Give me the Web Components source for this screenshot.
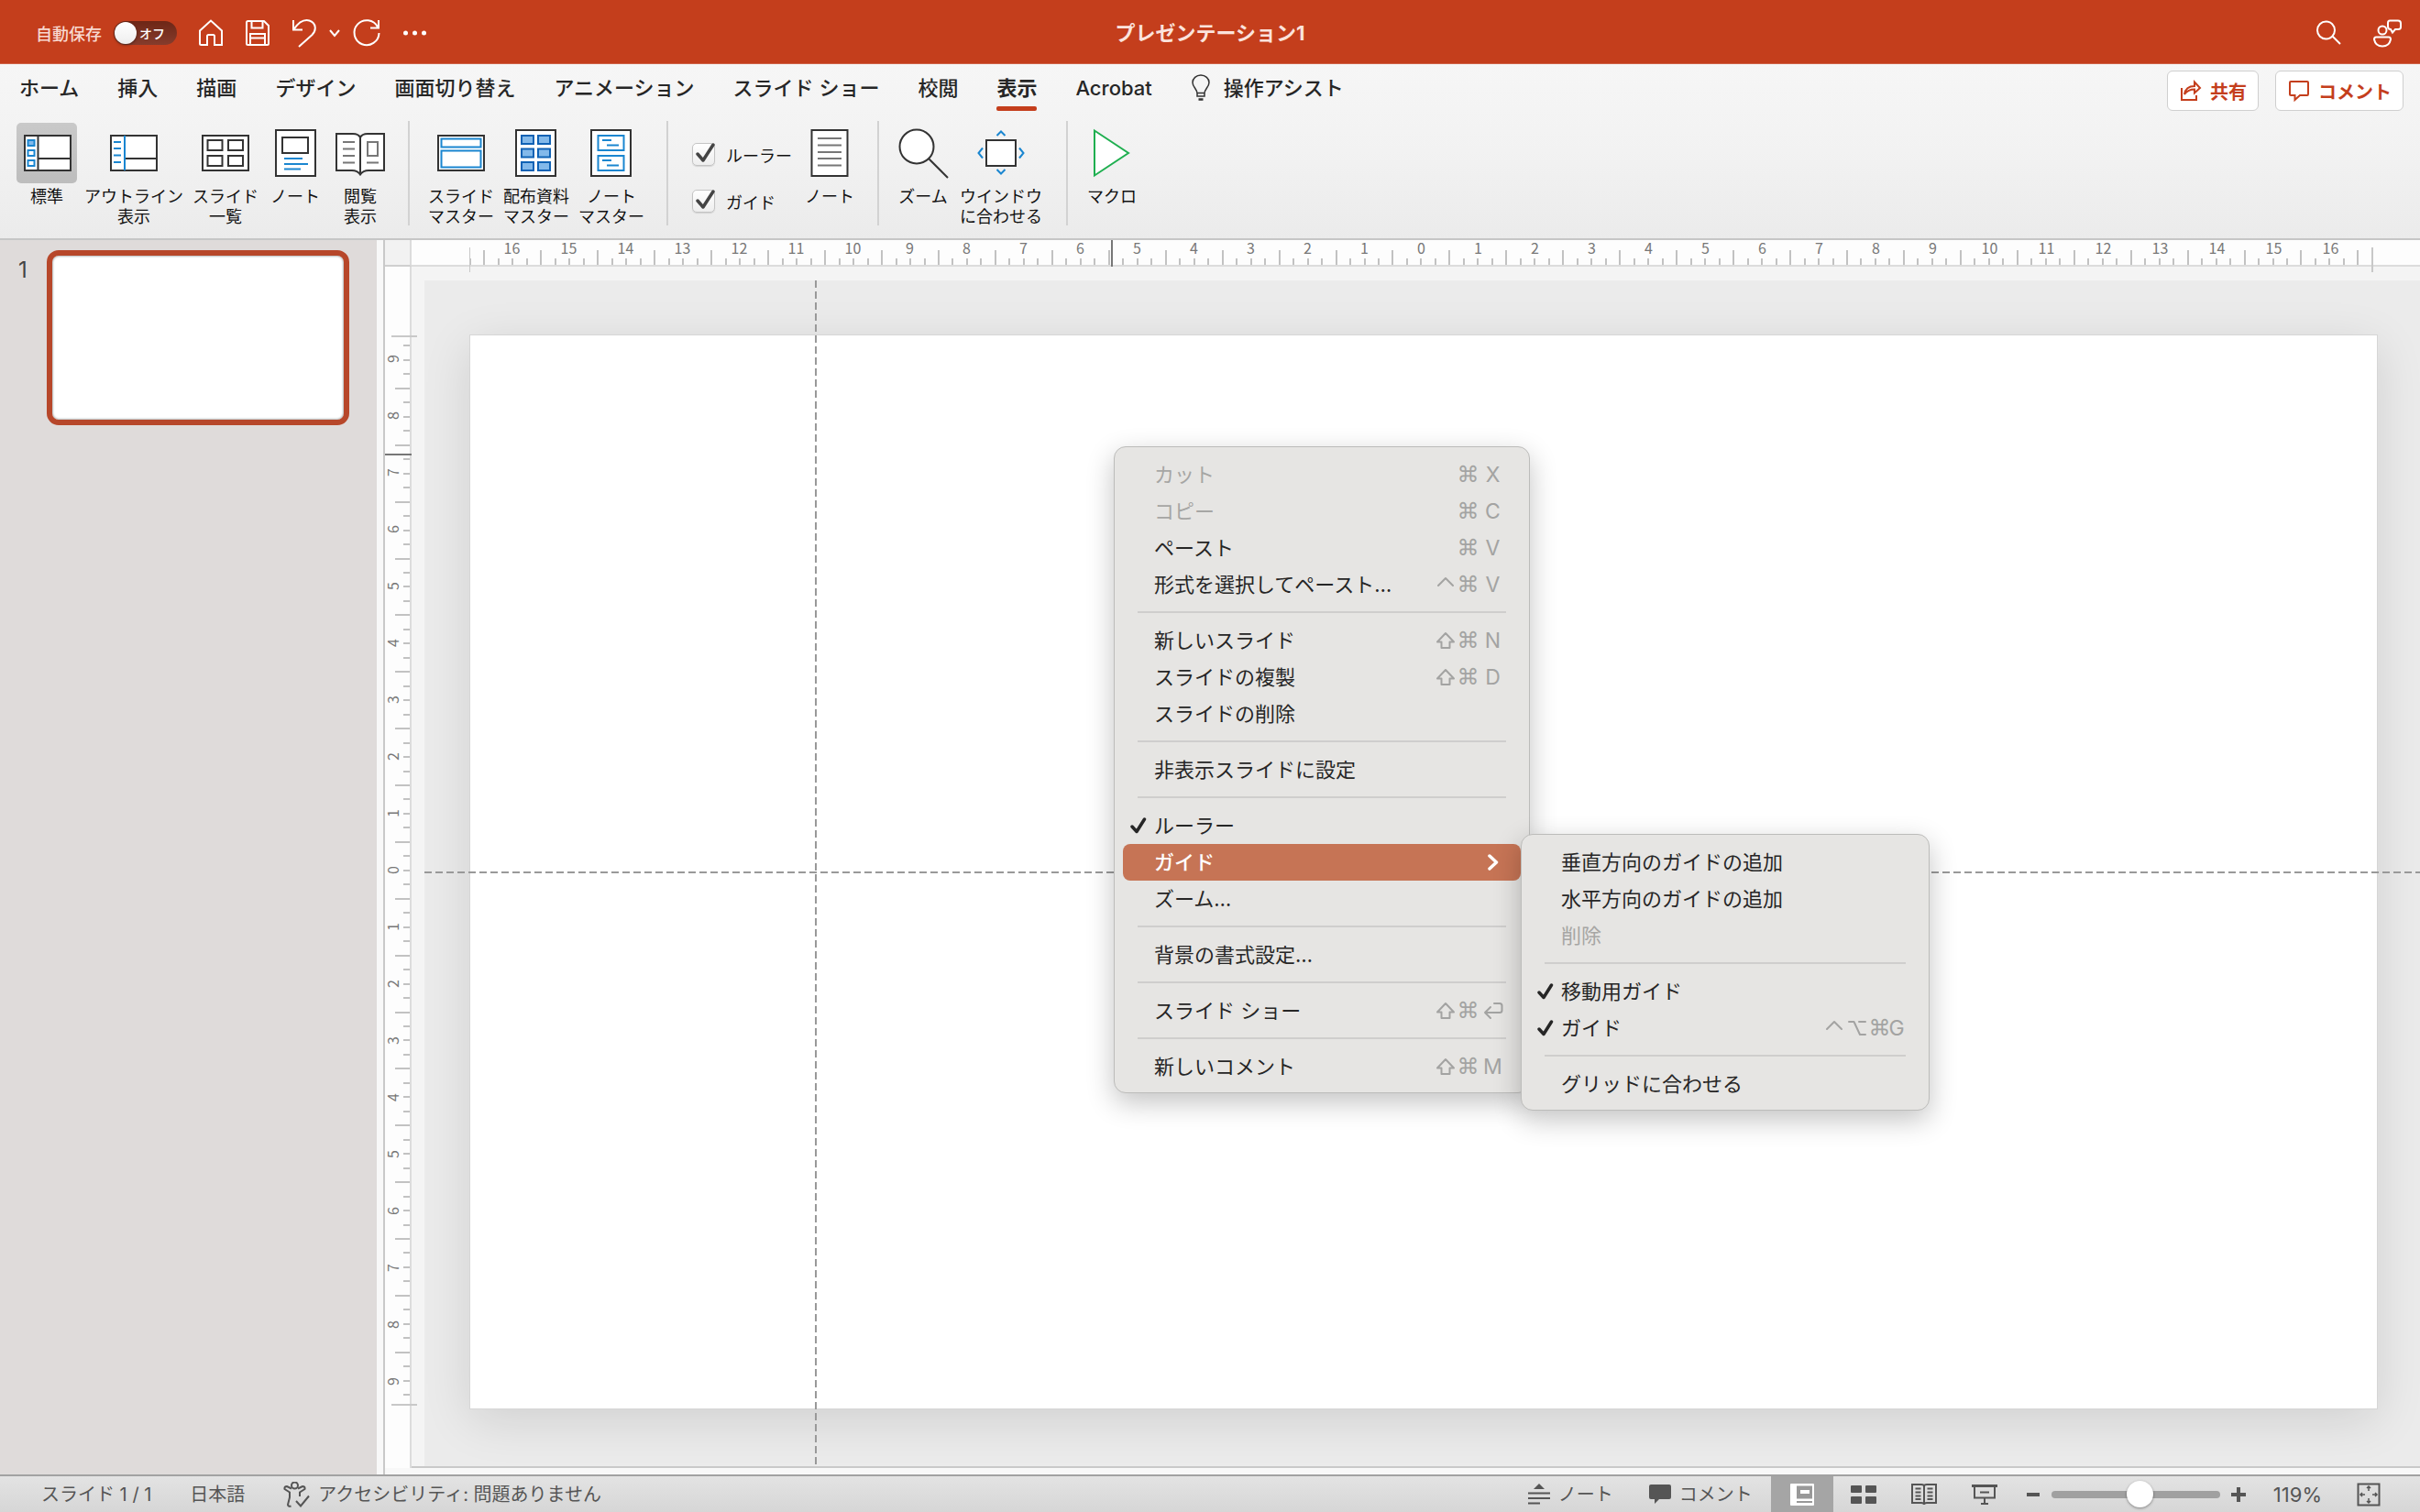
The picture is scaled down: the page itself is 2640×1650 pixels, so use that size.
<!DOCTYPE html>
<html lang="ja">
<head>
<meta charset="utf-8">
<title>プレゼンテーション1</title>
<style>
  * { box-sizing: border-box; }
  body {
    margin: 0;
    height: 100vh;
    overflow: hidden;
    display: flex;
    flex-direction: column;
    font-family: Inter, "Noto Sans CJK JP", sans-serif;
    font-size: 22px;
    color: #262626;
    background: #ebebeb;
  }
  main {
    flex: 1;
    min-height: 0;
    display: flex;
  }
  slide-editor { flex: 1; }
</style>
</head>
<body>
  <title-bar>プレゼンテーション1</title-bar>

  <ribbon-panel>
    <ribbon-tab slot="tabs">ホーム</ribbon-tab>
    <ribbon-tab slot="tabs">挿入</ribbon-tab>
    <ribbon-tab slot="tabs">描画</ribbon-tab>
    <ribbon-tab slot="tabs">デザイン</ribbon-tab>
    <ribbon-tab slot="tabs">画面切り替え</ribbon-tab>
    <ribbon-tab slot="tabs">アニメーション</ribbon-tab>
    <ribbon-tab slot="tabs">スライド ショー</ribbon-tab>
    <ribbon-tab slot="tabs">校閲</ribbon-tab>
    <ribbon-tab slot="tabs" selected>表示</ribbon-tab>
    <ribbon-tab slot="tabs">Acrobat</ribbon-tab>
    <ribbon-tab slot="tabs" icon="bulb">操作アシスト</ribbon-tab>

    <action-button slot="actions" icon="share">共有</action-button>
    <action-button slot="actions" icon="comment">コメント</action-button>

    <ribbon-group>
      <ribbon-button icon="normal" size="s" selected>標準</ribbon-button>
      <ribbon-button icon="outline" size="xxl">アウトライン<br>表示</ribbon-button>
      <ribbon-button icon="sorter" size="m">スライド<br>一覧</ribbon-button>
      <ribbon-button icon="notes" size="m">ノート</ribbon-button>
      <ribbon-button icon="reading" size="s">閲覧<br>表示</ribbon-button>
    </ribbon-group>
    <ribbon-group>
      <ribbon-button icon="slideMaster" size="l">スライド<br>マスター</ribbon-button>
      <ribbon-button icon="handoutMaster" size="l">配布資料<br>マスター</ribbon-button>
      <ribbon-button icon="notesMaster" size="l">ノート<br>マスター</ribbon-button>
    </ribbon-group>
    <ribbon-group>
      <ribbon-checks>
        <ribbon-check>ルーラー</ribbon-check>
        <ribbon-check>ガイド</ribbon-check>
      </ribbon-checks>
      <ribbon-button icon="notePage" size="s">ノート</ribbon-button>
    </ribbon-group>
    <ribbon-group>
      <ribbon-button icon="zoom" size="s">ズーム</ribbon-button>
      <ribbon-button icon="fitWindow" size="xl">ウインドウ<br>に合わせる</ribbon-button>
    </ribbon-group>
    <ribbon-group last>
      <ribbon-button icon="macro" size="s">マクロ</ribbon-button>
    </ribbon-group>
  </ribbon-panel>

  <main>
    <slide-list>
      <slide-thumbnail number="1"></slide-thumbnail>
    </slide-list>
    <slide-editor></slide-editor>
  </main>

  <status-bar></status-bar>

  <context-menu id="slide-menu">
    <menu-item keys="⌘, X" disabled>カット</menu-item>
    <menu-item keys="⌘, C" disabled>コピー</menu-item>
    <menu-item keys="⌘, V">ペースト</menu-item>
    <menu-item keys="control,⌘, V">形式を選択してペースト…</menu-item>
    <menu-separator></menu-separator>
    <menu-item keys="shift,⌘, N">新しいスライド</menu-item>
    <menu-item keys="shift,⌘, D">スライドの複製</menu-item>
    <menu-item>スライドの削除</menu-item>
    <menu-separator></menu-separator>
    <menu-item>非表示スライドに設定</menu-item>
    <menu-separator></menu-separator>
    <menu-item checked>ルーラー</menu-item>
    <menu-item active>ガイド
      <context-menu slot="submenu">
        <menu-item>垂直方向のガイドの追加</menu-item>
        <menu-item>水平方向のガイドの追加</menu-item>
        <menu-item disabled>削除</menu-item>
        <menu-separator></menu-separator>
        <menu-item checked>移動用ガイド</menu-item>
        <menu-item checked keys="control,option,⌘,G">ガイド</menu-item>
        <menu-separator></menu-separator>
        <menu-item>グリッドに合わせる</menu-item>
      </context-menu>
    </menu-item>
    <menu-item>ズーム…</menu-item>
    <menu-separator></menu-separator>
    <menu-item>背景の書式設定…</menu-item>
    <menu-separator></menu-separator>
    <menu-item keys="shift,⌘,return">スライド ショー</menu-item>
    <menu-separator></menu-separator>
    <menu-item keys="shift,⌘, M">新しいコメント</menu-item>
  </context-menu>

<script>
// Icon drawings: [width, height, markup]
const ICONS = {
  home: [28, 30, '<path d="M2 12.500 14 1.500 26 12.500V28H18V18.500Q18 17 16.500 17H11.500Q10 17 10 18.500V28H3.500Q2 28 2 26.500Z"/>'],
  save: [28, 30, '<path d="M3.500 2H21L26 7V26.500Q26 28 24.500 28H3.500Q2 28 2 26.500V3.500Q2 2 3.500 2ZM7.500 2V9.500H19.500V2M6 28V16H22V28M6 20.500H22"/>'],
  undo: [28, 32, '<path d="M2 2V12.500H12M2.500 12C8 4 14 1 19.500 2.500C27 5 27.500 13 22.500 18L8 31"/>'],
  chevron: [14, 10, '<path d="M2 2 7 8 12 2"/>'],
  redo: [32, 32, '<path d="M29 2V10.500H20M28 9.500A13.500 13.500 0 1 0 29.500 16"/>'],
  more: [28, 6, '<g fill="currentColor" stroke="none"><circle cx="3.500" cy="3" r="2.500"/><circle cx="13.500" cy="3" r="2.500"/><circle cx="23.500" cy="3" r="2.500"/></g>'],
  search: [28, 28, '<circle cx="11.500" cy="11" r="9.500"/><path d="M18.500 17.500 27 26"/>'],
  collab: [32, 32, '<circle cx="11" cy="13" r="4.500"/><path d="M4 20.500H18Q20 20.500 20 23Q18.500 30.500 11 30.500Q3.500 30.500 2 23Q2 20.500 4 20.500ZM19 2.500H28Q31 2.500 31 5.500V9.500Q31 12 28 12H25L22 15.500L20 12Q17 12 17 9V5Q17 2.500 19 2.500Z"/>'],
  bulb: [22, 30, '<g stroke="#333" stroke-width="1.500"><path d="M7 21C7 16 2 14 2 9A9 8 0 0 1 20 9C20 14 15 16 15 21V24H7ZM7 20.500H15"/><path d="M8.500 27.500H13.500" stroke-width="2.500"/></g>'],
  share: [24, 24, '<path d="M2 9V22H18V17M5 16C6 9.500 10 7 16 7V2.500L22 9 16 14.500V10.500C11 10.500 8 12 5 16Z"/>'],
  comment: [24, 24, '<path d="M3 2H21Q22 2 22 3V15.500Q22 17 21 17H13L7.500 22V17H3Q2 17 2 16V3Q2 2 3 2Z"/>'],
  normal: [56, 56, '<g stroke="#333"><rect x="4" y="9" width="50" height="38" fill="#fff"/><path d="M18.500 9V47M18.500 34H54"/></g><g stroke="#1a86d0" stroke-width="2"><rect x="7.500" y="14" width="7" height="6" fill="#83b9ea"/><rect x="7.500" y="25" width="7" height="6"/><rect x="7.500" y="36" width="7" height="6"/></g>'],
  outline: [56, 56, '<g stroke="#333"><rect x="3" y="9" width="50" height="38" fill="#fff"/><path d="M18 34H53"/></g><path stroke="#1a86d0" d="M18 9V47M6 16H14M6 23H14M6 30.500H14M6 38H14"/>'],
  sorter: [56, 56, '<g stroke="#333"><rect x="3" y="9" width="50" height="38" fill="#fff"/><rect x="8.500" y="14" width="16" height="11"/><rect x="31" y="14" width="16" height="11"/><rect x="8.500" y="31" width="16" height="11"/><rect x="31" y="31" width="16" height="11"/></g>'],
  notes: [56, 56, '<g stroke="#333"><rect x="7" y="3" width="43" height="50" fill="#fff"/><rect x="14" y="11" width="28" height="17"/></g><path stroke="#1a86d0" d="M16 34H36M16 40H42M16 45.500H34"/>'],
  reading: [56, 56, '<path stroke="#333" fill="#fff" d="M2 7H20Q26 7 28 11Q30 7 36 7H54V47H37Q31 47 28 51.500Q25 47 19 47H2Z"/><path stroke="#333" d="M28 11V51"/><path stroke="#777" d="M9 16H22M9 23.500H22M9 31H22M9 38.500H22M35 38.500H48"/><rect x="36" y="16" width="11" height="15" stroke="#777"/>'],
  slideMaster: [56, 56, '<rect x="3" y="9" width="50" height="38" stroke="#333" fill="#fff"/><g stroke="#1a86d0"><rect x="6.500" y="12.500" width="43" height="9"/><rect x="6.500" y="25.500" width="43" height="18"/></g>'],
  handoutMaster: [56, 56, '<rect x="6" y="3" width="43" height="50" stroke="#333" fill="#fff"/><g stroke="#0f62b5" fill="#83b9ea"><rect x="12" y="9" width="13" height="9"/><rect x="30" y="9" width="13" height="9"/><rect x="12" y="23.500" width="13" height="9"/><rect x="30" y="23.500" width="13" height="9"/><rect x="12" y="38" width="13" height="9"/><rect x="30" y="38" width="13" height="9"/></g>'],
  notesMaster: [56, 56, '<rect x="6" y="3" width="43" height="50" stroke="#333" fill="#fff"/><g stroke="#1a86d0"><rect x="13.500" y="9" width="28" height="16"/><rect x="13.500" y="31" width="28" height="16"/><path d="M18 14H28M23 19.500H36M18 36H28M23 41.500H36"/></g>'],
  notePage: [56, 56, '<rect x="8.500" y="3" width="39" height="50" stroke="#333" fill="#fff"/><path stroke="#777" d="M15 12H41M15 19.500H41M15 27H41M15 34H41M15 41.500H41"/>'],
  zoom: [56, 56, '<g stroke="#333"><circle cx="21" cy="21" r="18.500" fill="#fff"/><path d="M34.500 34.500 55 55"/></g>'],
  fitWindow: [56, 56, '<rect x="12" y="14" width="32" height="28" stroke="#333" fill="#fff"/><path stroke="#1a86d0" d="M23.500 9 28 4.500 32.500 9M23.500 46 28 50.500 32.500 46M8 22.500 3.500 28 8 33.500M48 22.500 52.500 28 48 33.500"/>'],
  macro: [56, 56, '<path stroke="#1faf50" fill="#fff" d="M9 3.500V52.500L46 28Z"/>'],
  boxTick: [25, 25, '<path stroke-width="3.500" stroke-linecap="round" stroke-linejoin="round" d="M6 12 12 19 23 2"/>'],
  tick: [18, 18, '<path stroke-width="3.500" stroke-linecap="round" stroke-linejoin="round" d="M2 10 7 15.500 15.500 2"/>'],
  arrow: [12, 18, '<path stroke-width="3.500" stroke-linecap="round" stroke-linejoin="round" d="M2 2 9.500 9 2 16"/>'],
  control: [20, 20, '<path stroke-linecap="round" stroke-linejoin="round" d="M2 11 10 3 18 11"/>'],
  shift: [22, 20, '<path stroke-linejoin="round" d="M11 2 20 11.500H15.500V18H6.500V11.500H2Z"/>'],
  option: [22, 20, '<path stroke-linecap="round" stroke-linejoin="round" d="M2 3H7.500L14 17H20M13 3H20"/>'],
  return: [22, 20, '<path stroke-linecap="round" stroke-linejoin="round" d="M12 2H18Q20.500 2 20.500 4.500V9.500Q20.500 12 18 12H2M8 6 2 12 8 18"/>'],
  a11y: [30, 28, '<circle cx="12.500" cy="4" r="3.500"/><path d="M9 7.500 4 5Q1 5 1.500 8L7 11.500V17L5 25Q5.500 27.500 8.500 26.500M16 7.500 21 5Q24 5 23.500 8L18 11.500V16M14 21 19 26.500 28 15.500"/>'],
  statusNotes: [26, 24, '<path fill="currentColor" stroke="none" d="M7 6 13 0 19 6Z"/><path d="M1 10.500H25M1 16H25M1 21.500H14"/>'],
  statusComment: [26, 24, '<path fill="currentColor" stroke="none" d="M3 1H23Q25 1 25 3V15Q25 17 23 17H12L7 22V17H3Q1 17 1 15V3Q1 1 3 1Z"/>'],
  viewNormal: [26, 26, '<rect x="0" y="1" width="26" height="24" rx="1" fill="#fff" stroke="none"/><rect x="7" y="3.500" width="17" height="14" fill="#999" stroke="none"/><rect x="11" y="8" width="10" height="4" fill="#fff" stroke="none"/><path stroke="#999" d="M7 21H24"/>'],
  viewSorter: [28, 24, '<g fill="currentColor" stroke="none"><rect x="0" y="2" width="12" height="8" rx="1"/><rect x="16" y="2" width="12" height="8" rx="1"/><rect x="0" y="14" width="12" height="8" rx="1"/><rect x="16" y="14" width="12" height="8" rx="1"/></g>'],
  viewReading: [28, 26, '<path d="M1 2H11Q14 2 14 4Q14 2 17 2H27V22H17Q14 22 14 24Q14 22 11 22H1ZM14 4V24M4.500 6.500H10.500M4.500 10.500H10.500M4.500 14.500H10.500M4.500 18H10.500M17.500 6.500H23.500M17.500 10.500H23.500M17.500 14.500H23.500M17.500 18H23.500"/>'],
  viewShow: [28, 26, '<path stroke-width="3" d="M0 3.500H28"/><path d="M3 4V16.500H25V4M9 10.500H19M14 17V22M10 23H18"/>'],
  minus: [16, 16, '<path stroke-width="4" d="M1 8H15"/>'],
  plus: [16, 16, '<path stroke-width="4" d="M0 8H16M8 0V16"/>'],
  fit: [26, 26, '<rect x="1.500" y="1.500" width="23" height="23"/><path stroke-width="1.500" d="M13 3.500V9M13 17V22.500M3.500 13H9M17 13H22.500M11 6 13 4 15 6M11 20 13 22 15 20M6 11 4 13 6 15M20 11 22 13 20 15"/>']
};

// Small helper: attach an open shadow root with the given markup
class BaseElement extends HTMLElement {
  render(html) {
    const template = document.createElement('template');
    template.innerHTML = `<style>
      *, :host { box-sizing: border-box; }
      button { font: inherit; color: inherit; background: none; border: 0; padding: 0; margin: 0; text-align: inherit; }
    </style>${html}`;
    this.attachShadow({ mode: 'open' });
    this.shadowRoot.appendChild(template.content.cloneNode(true));
  }
}

class AppIcon extends BaseElement {
  connectedCallback() {
    if (this.shadowRoot) return;
    const [w, h, body] = ICONS[this.getAttribute('name')];
    this.render(`
      <style>
        :host { display: block; flex: none; line-height: 0; }
        svg { display: block; fill: none; stroke: currentColor; stroke-width: 2; }
      </style>
      <svg width="${w}" height="${h}" viewBox="0 0 ${w} ${h}" aria-hidden="true">${body}</svg>
    `);
  }
}
customElements.define('app-icon', AppIcon);

class TitleBar extends BaseElement {
  constructor() {
    super();
    this.render(`
      <style>
        :host {
          flex: none;
          display: grid;
          grid-template-columns: 1fr auto 1fr;
          align-items: center;
          height: 70px;
          padding: 2px 20px 0;
          color: #fff;
          background: #c43e1c;
          border-bottom: 1px solid #cf6347;
        }
        .left, .right { display: flex; align-items: center; }
        .left { gap: 23px; padding-left: 19px; }
        .right { justify-content: flex-end; gap: 34px; }
        label { display: flex; align-items: center; gap: 13px; font-size: 18px; font-weight: 500; color: #f8d9d0; }
        .switch { display: grid; align-items: center; }
        .switch > * { grid-area: 1 / 1; }
        .switch span { font-size: 14px; color: #fff; padding-left: 28px; }
        input {
          appearance: none;
          display: flex;
          align-items: center;
          width: 69px;
          height: 26px;
          margin: 0;
          border-radius: 13px;
          background: linear-gradient(#6d2616, #863c2c);
        }
        input::before {
          content: "";
          width: 24px;
          height: 24px;
          margin-left: 1px;
          border-radius: 50%;
          background: linear-gradient(#fff, #eee);
          box-shadow: 0 1px 3px rgba(0, 0, 0, .5);
        }
        .undo { display: flex; align-items: center; gap: 12px; }
        h1 { margin: 0; font-size: 22px; line-height: 32px; font-weight: 700; color: #fbe3dc; }
      </style>
      <div class="left">
        <label>自動保存
          <span class="switch"><input type="checkbox" role="switch"><span>オフ</span></span>
        </label>
        <button aria-label="ホーム"><app-icon name="home"></app-icon></button>
        <button aria-label="保存"><app-icon name="save"></app-icon></button>
        <div class="undo">
          <button aria-label="元に戻す"><app-icon name="undo"></app-icon></button>
          <button aria-label="元に戻す履歴"><app-icon name="chevron"></app-icon></button>
          <button aria-label="やり直し"><app-icon name="redo"></app-icon></button>
        </div>
        <button aria-label="その他"><app-icon name="more"></app-icon></button>
      </div>
      <h1><slot></slot></h1>
      <div class="right">
        <button aria-label="検索"><app-icon name="search"></app-icon></button>
        <button aria-label="共同編集"><app-icon name="collab"></app-icon></button>
      </div>
    `);
  }
}
customElements.define('title-bar', TitleBar);

class RibbonPanel extends BaseElement {
  constructor() {
    super();
    this.render(`
      <style>
        :host {
          flex: none;
          display: block;
          background: linear-gradient(#f6f6f6, #f2f2f2 50%, #ebebeb);
          border-bottom: 2px solid #c6c6c6;
          padding-bottom: 14px;
        }
        .top { display: flex; justify-content: space-between; height: 62px; }
        nav { display: flex; gap: 42px; padding-left: 21px; align-items: flex-start; }
        .actions { display: flex; gap: 18px; padding: 7px 18px 0 0; align-items: flex-start; }
        .groups { display: flex; height: 114px; padding-left: 3px; }
      </style>
      <div class="top">
        <nav><slot name="tabs"></slot></nav>
        <div class="actions"><slot name="actions"></slot></div>
      </div>
      <div class="groups"><slot></slot></div>
    `);
  }
}
customElements.define('ribbon-panel', RibbonPanel);

class RibbonTab extends BaseElement {
  connectedCallback() {
    if (this.shadowRoot) return;
    const icon = this.getAttribute('icon');
    this.render(`
      <style>
        :host { display: block; }
        button {
          display: flex;
          align-items: center;
          gap: 14px;
          padding: 12px 0 6px;
          line-height: 28px;
          font-weight: 500;
          white-space: nowrap;
        }
        :host([selected]) button { font-weight: 700; }
        :host([selected])::after {
          content: "";
          display: block;
          height: 5px;
          border-radius: 2px;
          background: #c43e1c;
        }
        app-icon { margin: -1px 0; }
      </style>
      <button>${icon ? `<app-icon name="${icon}"></app-icon>` : ''}<slot></slot></button>
    `);
  }
}
customElements.define('ribbon-tab', RibbonTab);

class ActionButton extends BaseElement {
  connectedCallback() {
    if (this.shadowRoot) return;
    this.render(`
      <style>
        :host { display: block; }
        button {
          display: flex;
          align-items: center;
          gap: 9px;
          height: 44px;
          padding: 0 12px 0 13px;
          border: 1px solid #cfcfcf;
          border-radius: 6px;
          background: #fff;
          color: #c43e1c;
          font-size: 20px;
          font-weight: 700;
          white-space: nowrap;
        }
      </style>
      <button><app-icon name="${this.getAttribute('icon')}"></app-icon><slot></slot></button>
    `);
  }
}
customElements.define('action-button', ActionButton);

class RibbonGroup extends BaseElement {
  constructor() {
    super();
    this.render(`
      <style>
        :host {
          display: flex;
          align-items: flex-start;
          padding: 0 19px 0 15px;
          border-right: 2px solid #d2d2d2;
        }
        :host([last]) { border: 0; }
      </style>
      <slot></slot>
    `);
  }
}
customElements.define('ribbon-group', RibbonGroup);

class RibbonButton extends BaseElement {
  connectedCallback() {
    if (this.shadowRoot) return;
    this.render(`
      <style>
        :host { display: block; width: 66px; }
        :host([size="m"]) { width: 76px; }
        :host([size="l"]) { width: 82px; }
        :host([size="xl"]) { width: 104px; }
        :host([size="xxl"]) { width: 124px; }
        button {
          display: flex;
          flex-direction: column;
          align-items: center;
          width: 100%;
          padding-top: 2px;
          font-size: 18px;
          line-height: 22px;
          color: #111;
          text-align: center;
          white-space: nowrap;
        }
        .icon { padding: 5px; border-radius: 5px; margin-bottom: 4px; }
        :host([selected]) .icon { background: linear-gradient(#c9c9c9, #bdbdbd); }
      </style>
      <button>
        <span class="icon"><app-icon name="${this.getAttribute('icon')}"></app-icon></span>
        <span><slot></slot></span>
      </button>
    `);
  }
}
customElements.define('ribbon-button', RibbonButton);

class RibbonChecks extends BaseElement {
  constructor() {
    super();
    this.render(`
      <style>
        :host { display: flex; flex-direction: column; gap: 26px; padding: 24px 8px 0 11px; }
      </style>
      <slot></slot>
    `);
  }
}
customElements.define('ribbon-checks', RibbonChecks);

class RibbonCheck extends BaseElement {
  constructor() {
    super();
    this.render(`
      <style>
        :host { display: block; }
        label { display: flex; align-items: center; gap: 12px; height: 25px; font-size: 18px; color: #111; }
        .box { display: grid; place-items: center; }
        .box > * { grid-area: 1 / 1; }
        input {
          appearance: none;
          width: 25px;
          height: 25px;
          margin: 0;
          border: 1px solid #c4c4c4;
          border-radius: 5px;
          background: linear-gradient(#fff, #eee);
          box-shadow: 0 1px 1px rgba(0, 0, 0, .12);
        }
        app-icon { color: #444; z-index: 1; pointer-events: none; }
        input:not(:checked) + app-icon { visibility: hidden; }
      </style>
      <label>
        <span class="box"><input type="checkbox" checked><app-icon name="boxTick"></app-icon></span>
        <slot></slot>
      </label>
    `);
  }
}
customElements.define('ribbon-check', RibbonCheck);

class SlideList extends BaseElement {
  constructor() {
    super();
    this.render(`
      <style>
        :host {
          flex: none;
          display: block;
          width: 420px;
          padding: 11px 30px 0 20px;
          background: #dfdbda;
          border-right: 2px solid #c9c9c9;
          box-shadow: inset -7px 0 #f8f8f8;
        }
      </style>
      <slot></slot>
    `);
  }
}
customElements.define('slide-list', SlideList);

class SlideThumbnail extends BaseElement {
  connectedCallback() {
    if (this.shadowRoot) return;
    this.render(`
      <style>
        :host { display: flex; gap: 19px; font-size: 24px; color: #444; }
        span { width: 12px; line-height: 44px; }
        button {
          width: 330px;
          aspect-ratio: 330 / 191;
          border: 6px solid #b7472a;
          border-radius: 13px;
          background: #fff;
          box-shadow: inset 0 0 2px 1px #b5bcbc;
        }
      </style>
      <span>${this.getAttribute('number')}</span>
      <button aria-label="スライド ${this.getAttribute('number')}"></button>
    `);
  }
}
customElements.define('slide-thumbnail', SlideThumbnail);

// Ruler in centimetres, a tick each quarter, numbered outwards from 0
class SlideRuler extends BaseElement {
  connectedCallback() {
    if (this.shadowRoot) return;
    const max = Number(this.getAttribute('max'));
    const edge = Number(this.getAttribute('edge'));
    let labels = '';
    for (let n = -max; n <= max; n++) labels += `<span>${Math.abs(n)}</span>`;
    let ticks = '';
    for (let q = -edge; q <= edge; q++) ticks += `<i class="${Math.abs(q) % 4 === 2 ? 'half' : ''}"></i>`;
    this.render(`
      <style>
        :host {
          display: flex;
          position: relative;
          background: #fdfdfd;
          font: 16px/16px "Noto Sans CJK JP", sans-serif;
          color: #777;
        }
        .scale { flex: 1; display: grid; position: relative; }
        .scale > div { grid-area: 1 / 1; display: flex; }
        .labels span { flex: 4; }
        .ticks { justify-content: space-between; }
        i { background: #c2c2c2; }
        :host::after { content: ""; position: absolute; background: #777; }
        .scale::before, .scale::after { content: ""; position: absolute; background: #c8c8c8; }

        :host([axis="x"]) { border-bottom: 2px solid #dcdcdc; padding: 0 51px 0 63px; }
        :host([axis="x"]) .labels { padding: 0 calc(100% / 134); text-align: center; }
        :host([axis="x"]) .labels span { width: 0; }
        :host([axis="x"]) .ticks { align-items: flex-end; }
        :host([axis="x"]) i { width: 2px; height: 7px; }
        :host([axis="x"]) i.half { height: 16px; }
        :host([axis="x"])::after { left: 763px; top: 0; width: 2px; height: 29px; }
        :host([axis="x"]) .scale::before { left: 0; top: 8px; width: 1px; height: 27px; }
        :host([axis="x"]) .scale::after { right: 0; top: 8px; width: 2px; height: 27px; }

        :host([axis="y"]) { border-right: 2px solid #dcdcdc; padding: 70px 0 63px; }
        :host([axis="y"]) .scale > div { flex-direction: column; }
        :host([axis="y"]) .labels span { height: 0; width: 18px; writing-mode: vertical-rl; transform: rotate(180deg); text-align: center; }
        :host([axis="y"]) .ticks { align-items: flex-end; }
        :host([axis="y"]) i { height: 2px; width: 7px; }
        :host([axis="y"]) i.half { width: 16px; }
        :host([axis="y"]) i:first-child, :host([axis="y"]) i:last-child { visibility: hidden; }
        :host([axis="y"])::after { top: 204px; left: 0; height: 2px; width: 29px; }
        :host([axis="y"]) .scale::before { top: 5px; left: 7px; height: 2px; width: 28px; }
        :host([axis="y"]) .scale::after { bottom: 5px; left: 7px; height: 2px; width: 28px; }
      </style>
      <div class="scale">
        <div class="labels">${labels}</div>
        <div class="ticks">${ticks}</div>
      </div>
    `);
  }
}
customElements.define('slide-ruler', SlideRuler);

class SlideEditor extends BaseElement {
  constructor() {
    super();
    this.render(`
      <style>
        :host {
          display: grid;
          grid-template: 29px 1fr / 29px 1fr;
          min-width: 0;
          background: #f4f4f4;
          border-bottom: 7px solid #f8f8f8;
          box-shadow: inset 0 -2px #c9c9c9;
        }
        .corner { background: #f2f2f2; border-right: 2px solid #dcdcdc; border-bottom: 2px solid #cfcfcf; }
        slide-ruler { z-index: 1; }
        .stage {
          position: relative;
          overflow: hidden;
          display: flex;
          margin: 15px 0 2px 14px;
          padding: 60px 47px 63px 50px;
          background: #ebebeb;
        }
        .slide {
          flex: 1;
          background: #fff;
          outline: 1px solid #d6d6d6;
          box-shadow: 0 12px 50px rgba(0, 0, 0, .12);
        }
        .guide { position: absolute; }
        .guide.v {
          left: 426px; top: 0; bottom: 0; width: 2px;
          background: repeating-linear-gradient(#999 0 8px, transparent 8px 12px);
        }
        .guide.h {
          top: 50%; left: 0; right: 0; height: 2px; margin-top: -2px;
          background: repeating-linear-gradient(90deg, #999 0 8px, transparent 8px 12px);
        }
      </style>
      <div class="corner"></div>
      <slide-ruler axis="x" max="16" edge="67"></slide-ruler>
      <slide-ruler axis="y" max="9" edge="38"></slide-ruler>
      <div class="stage">
        <div class="slide"></div>
        <div class="guide v"></div>
        <div class="guide h"></div>
      </div>
    `);
  }
}
customElements.define('slide-editor', SlideEditor);

class StatusBar extends BaseElement {
  constructor() {
    super();
    this.render(`
      <style>
        :host {
          flex: none;
          display: flex;
          justify-content: space-between;
          height: 41px;
          padding: 0 43px 0 45px;
          border-top: 2px solid #a2a2a2;
          background: linear-gradient(#e3e3e3, #d6d6d6);
          font-size: 20px;
          line-height: 36px;
          color: #555;
          white-space: nowrap;
        }
        div { display: flex; align-items: stretch; }
        button { display: flex; align-items: center; justify-content: center; gap: 8px; }
        .left { gap: 42px; }
        .notes { margin-right: 38px; }
        .comments { margin-right: 20px; }
        .view { width: 66px; }
        .view[aria-pressed="true"] { width: 68px; background: #a5a5a5; }
        .zoom { align-items: center; gap: 12px; margin-left: 12px; }
        input {
          appearance: none;
          width: 184px;
          height: 30px;
          margin: 0;
          background: none;
        }
        input::-webkit-slider-runnable-track { height: 8px; border-radius: 4px; background: #a0a0a0; }
        input::-webkit-slider-thumb {
          appearance: none;
          width: 29px;
          height: 29px;
          margin-top: -11px;
          border-radius: 50%;
          background: #fff;
          box-shadow: 0 1px 3px rgba(0, 0, 0, .4);
        }
        .percent { margin: 0 38px 0 30px; font-size: 22px; }
      </style>
      <div class="left">
        <button>スライド 1 / 1</button>
        <button>日本語</button>
        <button><app-icon name="a11y"></app-icon>アクセシビリティ: 問題ありません</button>
      </div>
      <div>
        <button class="notes"><app-icon name="statusNotes"></app-icon>ノート</button>
        <button class="comments"><app-icon name="statusComment"></app-icon>コメント</button>
        <button class="view" aria-pressed="true" aria-label="標準"><app-icon name="viewNormal"></app-icon></button>
        <button class="view" aria-label="スライド一覧"><app-icon name="viewSorter"></app-icon></button>
        <button class="view" aria-label="閲覧表示"><app-icon name="viewReading"></app-icon></button>
        <button class="view" aria-label="スライド ショー"><app-icon name="viewShow"></app-icon></button>
        <div class="zoom">
          <button aria-label="縮小"><app-icon name="minus"></app-icon></button>
          <input type="range" min="0" max="100" value="53" aria-label="ズーム">
          <button aria-label="拡大"><app-icon name="plus"></app-icon></button>
        </div>
        <button class="percent">119%</button>
        <button aria-label="ウインドウに合わせる"><app-icon name="fit"></app-icon></button>
      </div>
    `);
  }
}
customElements.define('status-bar', StatusBar);

class ContextMenu extends BaseElement {
  constructor() {
    super();
    this.render(`
      <style>
        :host {
          position: absolute;
          z-index: 10;
          left: 1215px;
          top: 487px;
          width: 454px;
          padding: 10px 9px 8px;
          border: 1px solid #bcbcba;
          border-radius: 13px;
          background: #e6e5e3;
          box-shadow: 0 10px 30px rgba(0, 0, 0, .24);
          color: #262626;
          font-weight: 400;
        }
        :host([slot="submenu"]) { left: 100%; top: -11px; width: 446px; }
      </style>
      <slot></slot>
    `);
    this.setAttribute('role', 'menu');
  }
}

class MenuItem extends BaseElement {
  connectedCallback() {
    if (this.shadowRoot) return;
    const keys = (this.getAttribute('keys') || '').split(',').filter(Boolean);
    // A leading space sets the letter apart from its modifiers
    const keyHtml = keys.map((key) => {
      if (key === 'return') return '<kbd class="letter spaced"><app-icon name="return"></app-icon></kbd>';
      if (ICONS[key]) return `<kbd><app-icon name="${key}"></app-icon></kbd>`;
      if (/[A-Z]/.test(key)) return `<kbd class="letter${key[0] === ' ' ? ' spaced' : ''}">${key.trim()}</kbd>`;
      return `<kbd>${key}</kbd>`;
    }).join('');
    this.render(`
      <style>
        :host { display: block; position: relative; }
        button {
          display: grid;
          grid-template-columns: 26px 1fr auto;
          align-items: center;
          width: 100%;
          height: 40px;
          padding: 0 20px 0 8px;
          border-radius: 8px;
          font-size: 22px;
          line-height: 40px;
          white-space: nowrap;
        }
        .label { grid-column: 2; }
        .keys { grid-column: 3; display: flex; align-items: center; color: #a3a3a2; }
        kbd { width: 25px; height: 40px; font: 24px/40px "DejaVu Sans", sans-serif; display: flex; align-items: center; justify-content: center; }
        kbd.letter { width: 12px; font: 23px/40px Inter, sans-serif; }
        kbd.letter.spaced { width: 21px; margin-left: 4px; }
        :host([disabled]) .label { color: #a6a6a4; }
        :host([active]) button { background: #c67455; color: #fff; font-weight: 500; }
        :host([active]) app-icon { grid-column: 3; margin-right: 4px; }
      </style>
      <button role="menuitem" ${this.hasAttribute('disabled') ? 'disabled' : ''}>
        ${this.hasAttribute('checked') ? '<app-icon name="tick"></app-icon>' : ''}
        <span class="label"><slot></slot></span>
        ${keys.length ? `<span class="keys">${keyHtml}</span>` : ''}
        ${this.hasAttribute('active') ? '<app-icon name="arrow"></app-icon>' : ''}
      </button>
      <slot name="submenu"></slot>
    `);
  }
}

class MenuSeparator extends BaseElement {
  constructor() {
    super();
    this.render(`
      <style>
        :host { display: block; padding: 9px 16px 10px; }
        hr { margin: 0; border: 0; height: 2px; background: #cfcecd; }
      </style>
      <hr>
    `);
  }
}
customElements.define('context-menu', ContextMenu);
customElements.define('menu-item', MenuItem);
customElements.define('menu-separator', MenuSeparator);
</script>
</body>
</html>
